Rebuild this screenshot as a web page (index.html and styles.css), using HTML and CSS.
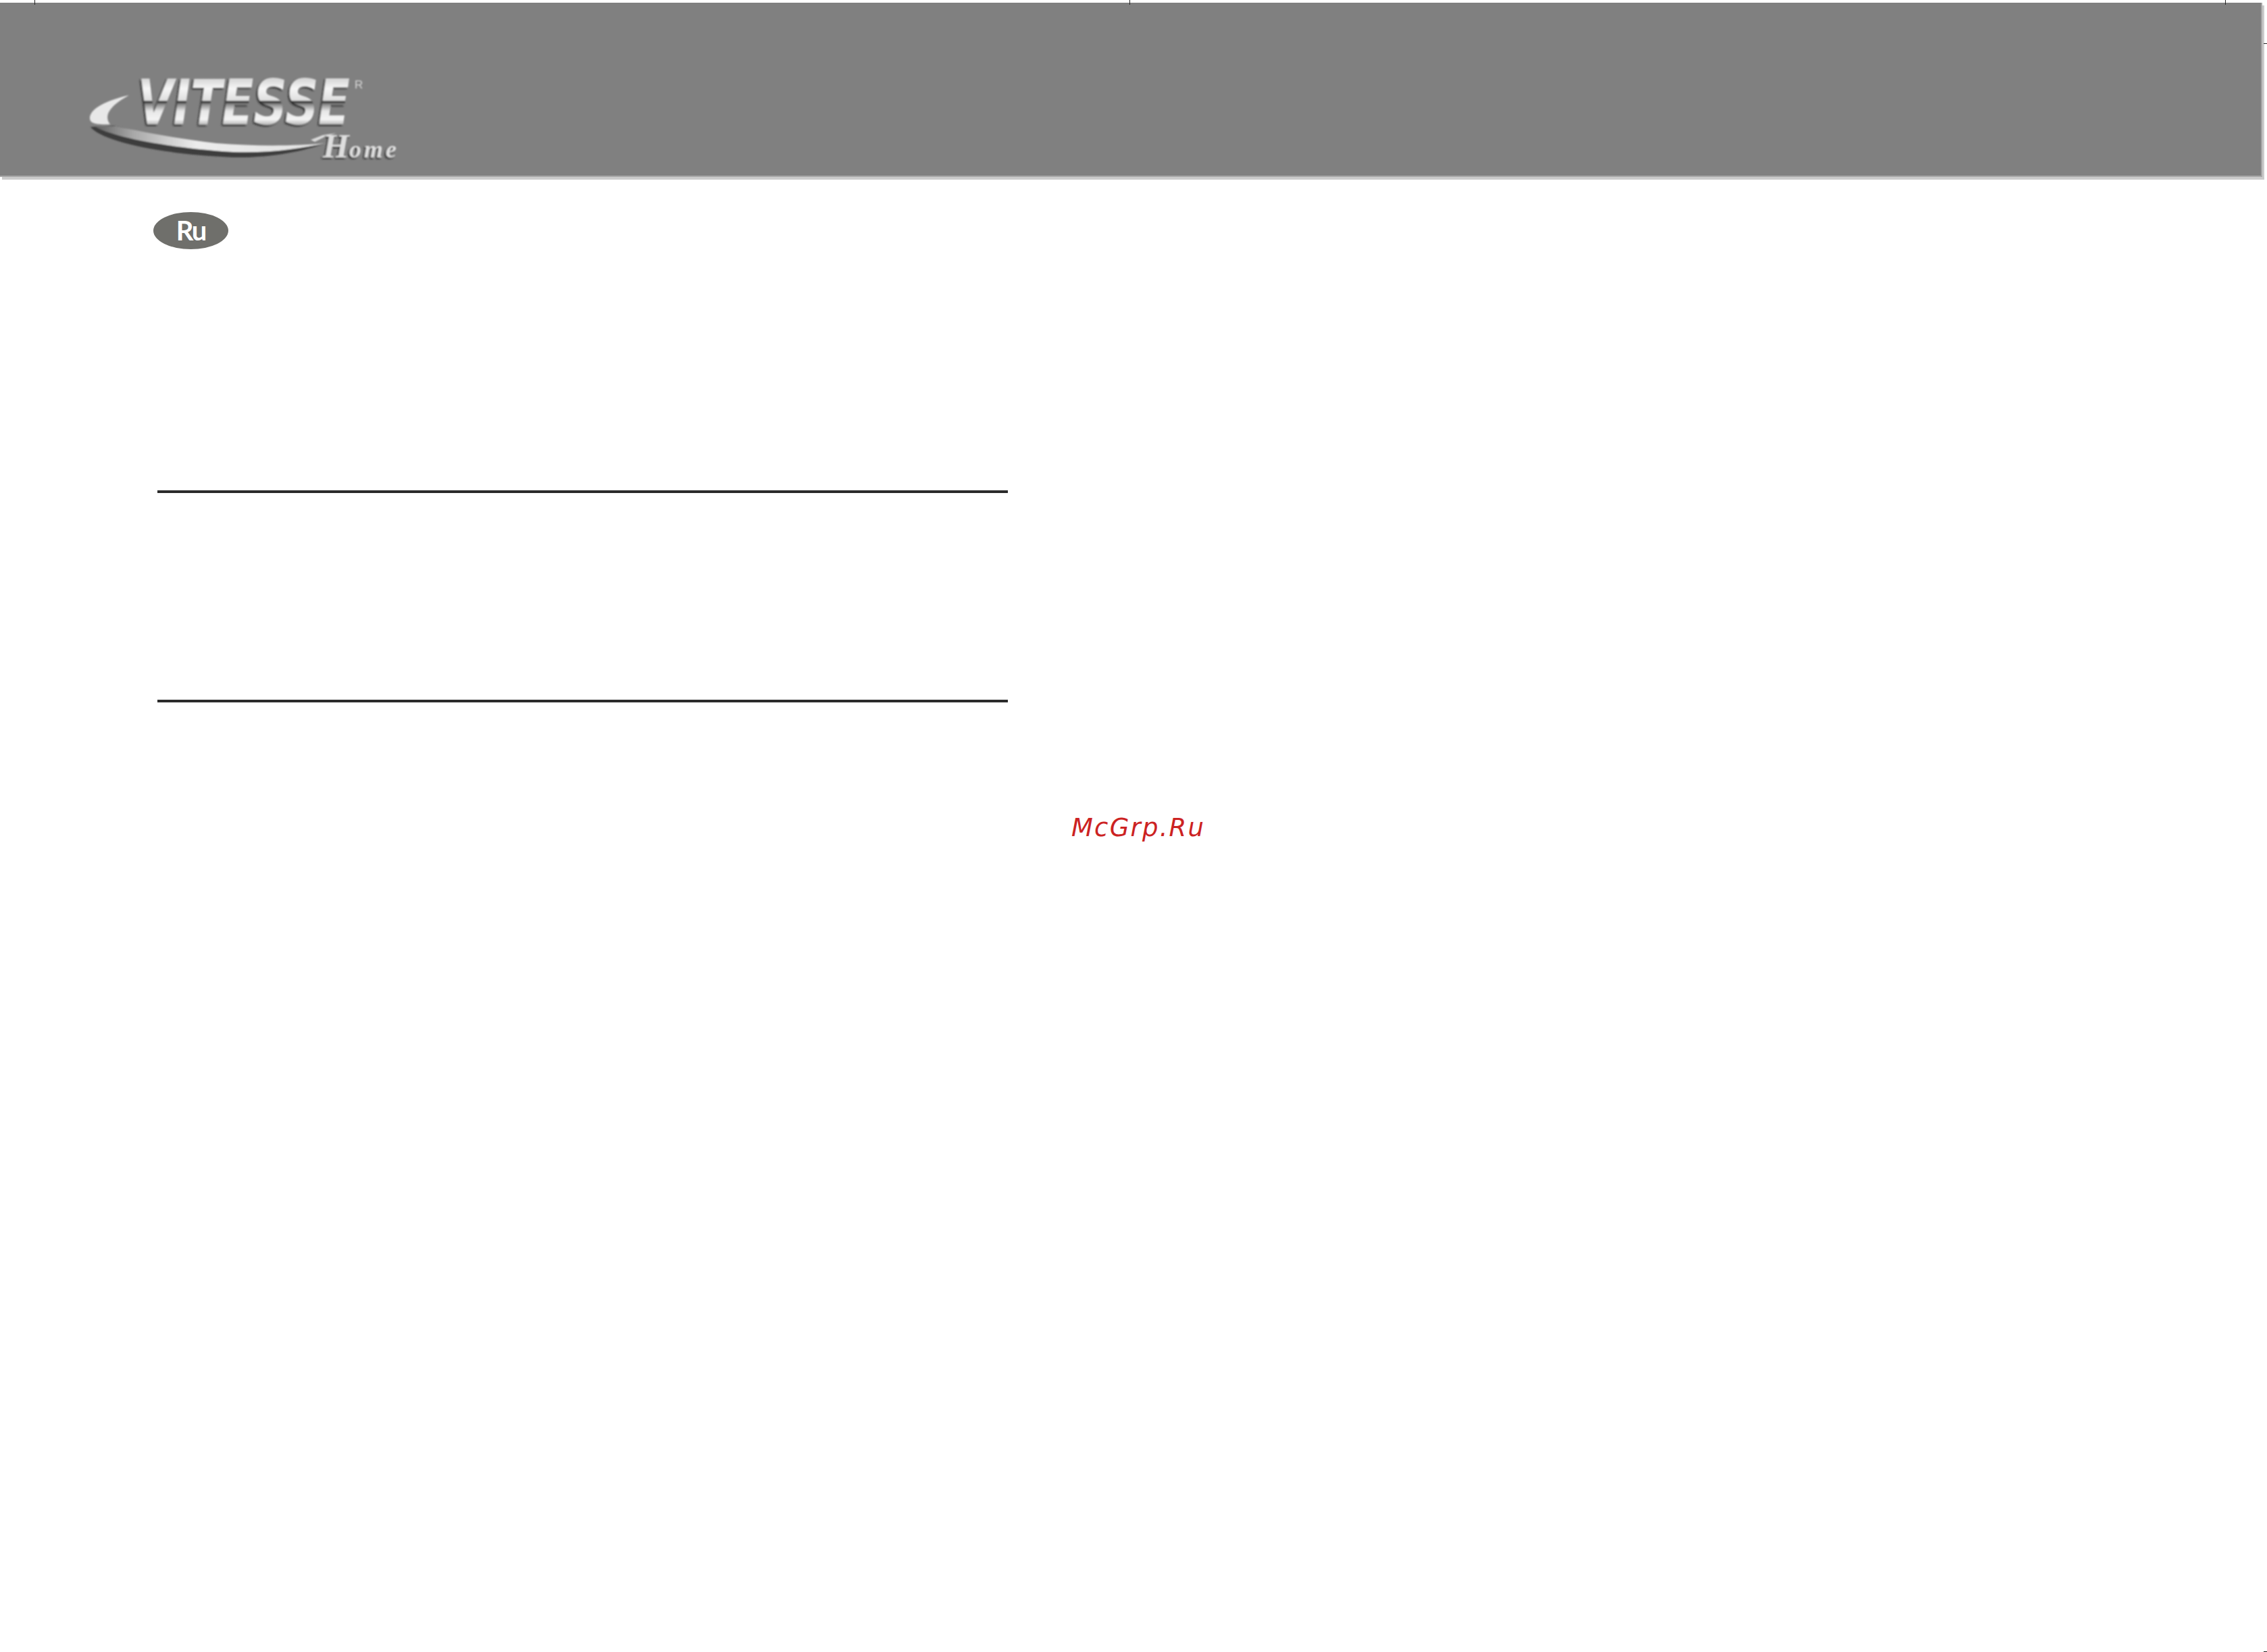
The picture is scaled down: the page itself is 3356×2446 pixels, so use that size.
FILE: index.html
```html
<!DOCTYPE html>
<html lang="ru">
<head>
<meta charset="utf-8">
<title>Vitesse Home</title>
<link rel="stylesheet" href="styles.css">
</head>
<body>
<div class="page">
  <i class="tick tick-a"></i><i class="tick tick-b"></i><i class="tick tick-c"></i>
  <i class="side side-top"></i><i class="side side-bottom"></i>
  <header class="band">
    <svg class="logo" width="520" height="170" viewBox="100 90 520 170" aria-label="Vitesse Home">
      <defs>
        <linearGradient id="letters" x1="0" y1="116" x2="0" y2="185" gradientUnits="userSpaceOnUse">
          <stop offset="0" stop-color="#d4d4d4"/><stop offset=".22" stop-color="#f6f6f6"/><stop offset=".47" stop-color="#dedede"/>
          <stop offset=".5" stop-color="#2a2a2a"/><stop offset=".56" stop-color="#8a8a8a"/><stop offset=".7" stop-color="#e6e6e6"/>
          <stop offset=".88" stop-color="#f4f4f4"/><stop offset="1" stop-color="#b4b4b4"/>
        </linearGradient>
        <linearGradient id="sweep" x1="135" y1="0" x2="480" y2="0" gradientUnits="userSpaceOnUse">
          <stop offset="0" stop-color="#5a5a5a"/><stop offset=".18" stop-color="#a8a8a8"/><stop offset=".45" stop-color="#ececec"/><stop offset="1" stop-color="#e2e2e2"/>
        </linearGradient>
        <filter id="soft" x="-5%" y="-10%" width="110%" height="120%"><feGaussianBlur stdDeviation=".9"/></filter>
        <filter id="edge" x="-5%" y="-10%" width="110%" height="120%">
          <feDropShadow dx="-2" dy="2" stdDeviation=".8" flood-color="#222"/>
        </filter>
      </defs>
      <g filter="url(#soft)">
        <path class="crescent" d="M191 141C160 148 132 160 133 176C134 182 140 185 163 184C154 172 160 158 191 141Z"/>
        <path class="under" d="M134 188C150 208 230 228 345 233C400 234 450 224 482 212C440 221 380 222 320 217C260 210 215 196 168 186Z"/>
        <path fill="url(#sweep)" d="M140 187C165 202 240 218 345 225C400 227 445 220 482 212C440 216 380 217 320 212C260 205 215 196 172 187Z"/>
        <path class="flourish" d="M460 207L478 200L498 197L480 203L466 210Z"/>
        <text class="vit" x="204" y="184" textLength="314" lengthAdjust="spacingAndGlyphs" fill="url(#letters)" filter="url(#edge)">VITESSE</text>
        <text class="home" x="478" y="233" filter="url(#edge)">H<tspan class="home-rest">ome</tspan></text>
        <text class="tm" x="525" y="131">R</text>
      </g>
    </svg>
  </header>
  <main class="content">
    <div class="badge">Ru</div>
    <hr class="rule rule-first">
    <hr class="rule rule-second">
    <p class="mark">McGrp.Ru</p>
  </main>
</div>
</body>
</html>
```
FILE: styles.css
```css
html, body {
  margin: 0;
  padding: 0;
  background: #fff;
}
.page {
  position: relative;
  width: 3356px;
  height: 2446px;
  overflow: hidden;
  padding-top: 4px;
  box-sizing: border-box;
}
.band {
  width: 3347px;
  height: 256px;
  background: #808080;
  border-right: 2px solid #a6a6a6;
  border-bottom: 2px solid #a6a6a6;
  box-shadow: 3px 4px 0 #cbcbcb;
}
.logo {
  display: block;
  margin-left: 100px;
  padding-top: 86px;
  height: 170px;
  overflow: visible;
}
.vit {
  font-family: "DejaVu Sans", sans-serif;
  font-weight: 700;
  font-style: italic;
  font-size: 92px;
}
.crescent { fill: #e8e8e8; }
.under { fill: #3c3c3c; }
.flourish { fill: #dcdcdc; }
.home {
  font-family: "Liberation Serif", serif;
  font-style: italic;
  font-weight: 700;
  font-size: 50px;
  fill: #dedede;
}
.home-rest {
  font-size: 36px;
  letter-spacing: 4px;
}
.tm {
  font-family: "Liberation Sans", sans-serif;
  font-size: 17px;
  fill: #d8d8d8;
}
.content {
  padding-left: 227px;
  padding-top: 52px;
}
.badge {
  width: 111px;
  height: 55px;
  border-radius: 50%;
  background: #6f6f6b;
  color: #fff;
  font-family: "Lato", sans-serif;
  font-weight: 700;
  font-size: 40px;
  line-height: 55px;
  letter-spacing: -2px;
  text-align: center;
}
.rule {
  width: 1259px;
  height: 4px;
  margin: 0 0 0 6px;
  border: 0;
  background: #2b2b2b;
}
.rule-first { margin-top: 357px; }
.rule-second { margin-top: 306px; }
.mark {
  margin: 163px 0 0 1359px;
  font-family: "DejaVu Sans", sans-serif;
  font-style: italic;
  font-size: 37px;
  line-height: 46px;
  letter-spacing: 2.2px;
  color: #cc2222;
  white-space: nowrap;
}
.tick {
  position: absolute;
  top: 0;
  width: 1px;
  height: 7px;
  background: #222;
}
.tick-a { left: 51px; }
.tick-b { left: 1672px; }
.tick-c { left: 3294px; }
.side {
  position: absolute;
  left: 3351px;
  width: 5px;
  height: 1px;
  background: #222;
}
.side-top { top: 64px; }
.side-bottom { top: 2445px; }
```
